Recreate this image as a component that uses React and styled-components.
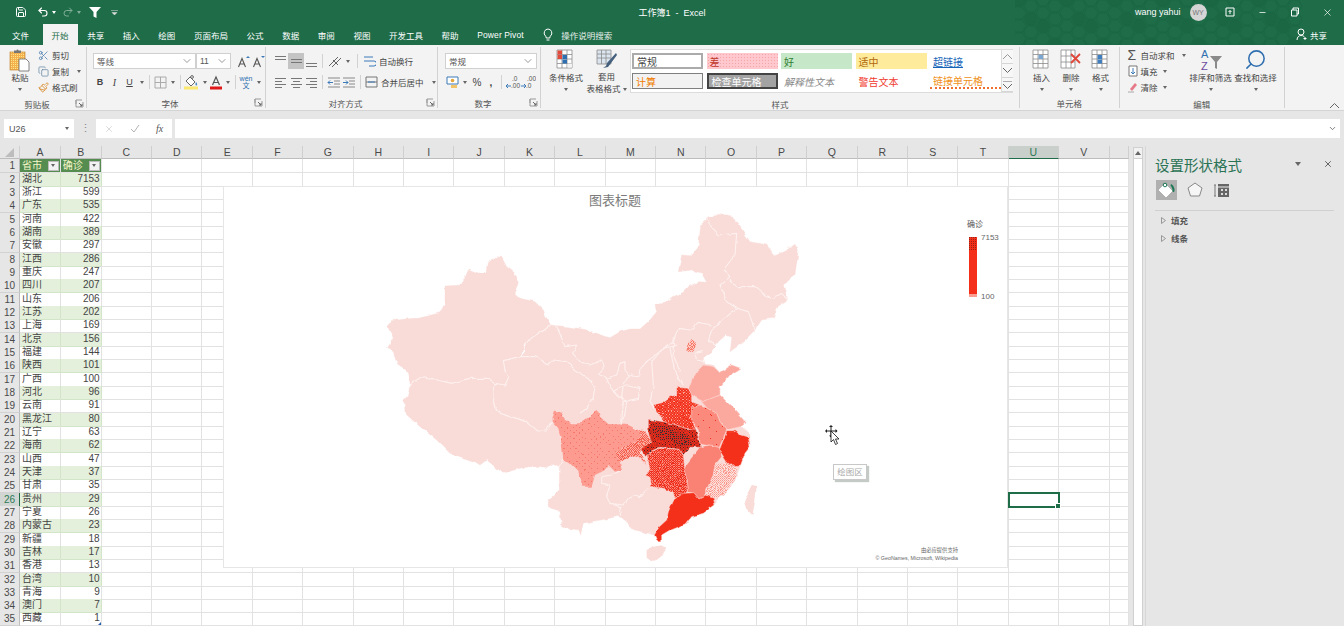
import React from "react";
import styled, { createGlobalStyle, css } from "styled-components";
import { ChevronDown, Copy, Paintbrush, Scissors, Save, Undo2, Redo2, X, Minus, Search } from "lucide-react";

const GlobalStyle = createGlobalStyle`
  html, body { margin: 0; padding: 0; width: 1344px; height: 626px; overflow: hidden; background: #e6e6e6; }
  body { font-family: "Liberation Sans", "Noto Sans CJK SC", sans-serif; color: #444; }
  * { box-sizing: border-box; }
`;

const GREEN = "#1e6c48";
const CJK = `"Liberation Sans", "Noto Sans CJK SC", sans-serif`;

// ---------- window header ----------
const Page = styled.div`
  width: 1344px;
  height: 626px;
  display: flex;
  flex-direction: column;
  overflow: hidden;
`;
const Header = styled.header`
  position: relative;
  background: ${GREEN};
  color: #fff;
  height: 45px;
  flex: none;
`;
const HexArt = styled.svg`
  position: absolute;
  left: 1015px;
  top: 0;
`;
const TitleBar = styled.div`
  position: relative;
  height: 24px;
  display: grid;
  grid-template-columns: 1fr auto 1fr;
  align-items: center;
  font-size: 9px;
`;
const Qat = styled.div`
  display: flex;
  align-items: center;
  padding-left: 14px;
`;
const QatBtn = styled.span`
  width: ${(p) => p.$w}px;
  display: flex;
  align-items: center;
  justify-content: center;
  opacity: ${(p) => (p.$dim ? 0.45 : 1)};
`;
const WindowTitle = styled.div`
  white-space: pre;
`;
const WinControls = styled.div`
  display: flex;
  justify-content: flex-end;
  align-items: center;
`;
const UserName = styled.span`
  font-size: 9px;
  margin-right: 9px;
`;
const Avatar = styled.span`
  width: 17px;
  height: 17px;
  border-radius: 50%;
  background: #d5d5d5;
  color: #777;
  font-size: 7px;
  display: flex;
  align-items: center;
  justify-content: center;
  margin-right: 7px;
`;
const WinBtn = styled.span`
  width: 32.6px;
  display: flex;
  justify-content: center;
  align-items: center;
`;
const TabBar = styled.nav`
  position: relative;
  height: 21px;
  display: flex;
  align-items: stretch;
  padding-left: 3px;
  font-size: 8.5px;
`;
const Tab = styled.span`
  padding: 0 9px;
  display: flex;
  align-items: center;
  white-space: nowrap;
  margin-right: ${(p) => p.$mr ?? 0.6}px;
  letter-spacing: ${(p) => p.$track || 0}px;
  ${(p) =>
    p.$active &&
    css`
      background: #f3f3f3;
      color: ${GREEN};
    `}
`;
const TellMe = styled.span`
  display: flex;
  align-items: center;
  gap: 8px;
  margin-left: 10px;
  color: #e8f0ea;
`;
const ShareBtn = styled.span`
  margin-left: auto;
  margin-right: 17px;
  display: flex;
  align-items: center;
  gap: 2px;
`;

// ---------- ribbon ----------
const Ribbon = styled.section`
  height: 66px;
  flex: none;
  background: #f3f3f3;
  border-bottom: 1px solid #d4d4d4;
  display: flex;
  position: relative;
`;
const GroupBox = styled.div`
  width: ${(p) => p.$w}px;
  flex: none;
  display: flex;
  flex-direction: column;
  border-right: 1px solid #d2d2d2;
  margin: 2px 0 2px;
`;
const GroupBody = styled.div`
  height: 48px;
  margin-top: ${(p) => p.$mt || 0}px;
  padding-left: ${(p) => p.$pl || 0}px;
  display: flex;
  gap: ${(p) => p.$gap || 0}px;
  flex-direction: ${(p) => (p.$col ? "column" : "row")};
`;
const GroupFoot = styled.div`
  margin-top: auto;
  height: 14px;
  padding-top: 3px;
  display: flex;
  align-items: center;
  font-size: 8.5px;
  color: #555;
`;
const GroupName = styled.span`
  flex: 1;
  text-align: center;
`;
const Launcher = styled.svg`
  width: 11px;
  margin-right: 1px;
`;
const Big = styled.div`
  width: ${(p) => p.$w}px;
  flex: none;
  display: flex;
  flex-direction: column;
  align-items: center;
  font-size: 8.5px;
  color: #444;
  line-height: 12px;
  white-space: nowrap;
`;
const BigIcon = styled.div`
  height: 25px;
  display: flex;
  align-items: center;
  justify-content: center;
`;
const Caret = styled.i`
  display: inline-block;
  flex: none;
  width: 0;
  height: 0;
  border-left: 2.5px solid transparent;
  border-right: 2.5px solid transparent;
  border-top: 3px solid #666;
  margin: ${(p) => p.$m || "0"};
`;
const CaretLine = styled.div`
  height: 10px;
  display: flex;
  align-items: center;
`;
const SmallCol = styled.div`
  width: ${(p) => p.$w}px;
  flex: none;
  display: flex;
  flex-direction: column;
`;
const SmallRow = styled.div`
  height: 16px;
  display: flex;
  align-items: center;
  gap: 3px;
  font-size: 8.5px;
  color: #444;
  white-space: nowrap;
`;
const Toolbar = styled.div`
  height: 16px;
  display: flex;
  align-items: center;
`;
const Slot = styled.span`
  width: ${(p) => p.$w}px;
  height: 16px;
  flex: none;
  display: flex;
  align-items: center;
  justify-content: center;
  font-size: ${(p) => p.$fs || 9}px;
  font-weight: ${(p) => (p.$b ? 700 : 400)};
  font-style: ${(p) => (p.$i ? "italic" : "normal")};
  text-decoration: ${(p) => (p.$u ? "underline" : "none")};
  font-family: ${(p) => (p.$serif ? `"Liberation Serif", serif` : "inherit")};
  background: ${(p) => (p.$on ? "#c4c4c4" : "transparent")};
  color: #444;
`;
const PhoneticSlot = styled(Slot)`
  color: #2b6fb0;
  line-height: 7px;
  text-align: center;
`;
const Sep = styled.span`
  width: 1px;
  height: 14px;
  flex: none;
  background: #d2d2d2;
  margin: 0 ${(p) => p.$m || 3}px;
`;
const SelectBox = styled.div`
  width: ${(p) => p.$w}px;
  height: 16px;
  flex: none;
  background: #fff;
  border: 1px solid #d0d0d0;
  display: flex;
  align-items: center;
  justify-content: space-between;
  padding: 0 2px 0 3px;
  font-size: 8.5px;
  color: #555;
`;

// style gallery
const Gallery = styled.div`
  width: 383px;
  height: 44px;
  margin: 2px 0 0 2px;
  background: #fff;
  border: 1px solid #dcdcdc;
  display: flex;
`;
const GalleryGrid = styled.div`
  flex: 1;
  padding: 3px 0 0 1px;
  display: grid;
  grid-template-columns: repeat(5, 71px);
  grid-template-rows: 16px 16px;
  column-gap: 3.5px;
  row-gap: 4px;
`;
const styleKinds = {
  normal: css`background: #fff; border: 2px solid #ababab; color: #444;`,
  bad: css`background: #ffc7ce; color: #c0392b; background-image: radial-gradient(#f5a5a5 0.6px, transparent 0.7px); background-size: 3px 3px;`,
  good: css`background: #c6e7c8; color: #2e7d32;`,
  neutral: css`background: #ffeb9c; color: #b0660a; background-image: radial-gradient(#e9b870 0.5px, transparent 0.6px); background-size: 4px 4px;`,
  link: css`color: #1464b8; text-decoration: underline;`,
  calc: css`background: #f2f2f2; border: 1px solid #7f7f7f; color: #f07d00;`,
  check: css`background: #a3a3a3; border: 2px solid #444; color: #fff;`,
  note: css`color: #888; font-style: italic;`,
  warn: css`color: #f03a2e;`,
  linked: css`color: #f09020; border-bottom: 2px dotted #f07030;`,
};
const StyleCell = styled.span`
  display: flex;
  align-items: center;
  padding-left: 3px;
  font-size: 10px;
  white-space: nowrap;
  overflow: hidden;
  ${(p) => styleKinds[p.$kind]}
`;
const GalleryScroll = styled.div`
  width: 12px;
  flex: none;
  display: grid;
  grid-template-rows: 14px 14px 14px;
  border-left: 1px solid #dcdcdc;
  background: #f7f7f7;
`;
const ScrollCell = styled.span`
  display: flex;
  align-items: center;
  justify-content: center;
  border-bottom: 1px solid #d5d5d5;
`;
const CollapseWrap = styled.div`
  flex: 1;
  display: flex;
  align-items: flex-end;
  justify-content: flex-end;
  padding: 0 5px 2px 0;
`;

// ---------- formula bar ----------
const FormulaBar = styled.div`
  height: 35px;
  flex: none;
  padding: 8px 4px;
  display: flex;
  align-items: stretch;
  background: #e6e6e6;
`;
const NameBox = styled.div`
  width: 70px;
  background: #fff;
  display: flex;
  align-items: center;
  justify-content: space-between;
  padding: 0 5px;
  font-size: 9px;
  color: #555;
`;
const Dots = styled.span`
  width: 22px;
  text-align: center;
  color: #888;
  font-size: 11px;
  line-height: 19px;
`;
const FxBox = styled.div`
  width: 76px;
  background: #fff;
  display: grid;
  grid-template-columns: 26px 25px 25px;
  align-items: center;
  justify-items: center;
  color: #b4b4b4;
`;
const FxLabel = styled.span`
  font-family: "Liberation Serif", serif;
  font-style: italic;
  color: #555;
  font-size: 10px;
`;
const FormulaInput = styled.div`
  flex: 1;
  margin-left: 3px;
  background: #fff;
  display: flex;
  align-items: center;
  justify-content: flex-end;
  padding-right: 3px;
`;

// ---------- sheet ----------
const Workspace = styled.div`
  flex: 1;
  display: flex;
  min-height: 0;
`;
const SheetArea = styled.div`
  position: relative;
  width: 1129px;
  flex: none;
  overflow: hidden;
  background: #fff;
`;
const COLS = "20px 40.8px 40.9px repeat(20, 50.4px) 1fr";
const SheetRow = styled.div`
  display: grid;
  grid-template-columns: ${COLS};
  height: 13.33px;
`;
const HeadCell = styled.div`
  background: ${(p) => (p.$on ? "#c9cfcb" : "#e6e6e6")};
  border-right: 1px solid #cfcfcf;
  border-bottom: ${(p) => (p.$on ? `1px solid ${GREEN}` : "1px solid #bdbdbd")};
  color: ${(p) => (p.$on ? "#2b7a55" : "#4a4a4a")};
  font-size: 10.5px;
  display: flex;
  align-items: center;
  justify-content: center;
  overflow: hidden;
`;
const RowHead = styled.div`
  background: ${(p) => (p.$on ? "#d2d6d3" : "#e6e6e6")};
  border-right: ${(p) => (p.$on ? `1.5px solid ${GREEN}` : "1px solid #bdbdbd")};
  border-bottom: 1px solid #d2d2d2;
  color: ${(p) => (p.$on ? "#2b7a55" : "#4a4a4a")};
  font-size: 10px;
  line-height: 13px;
  text-align: right;
  padding-right: 4px;
`;
const Cell = styled.div`
  position: relative;
  border-right: 1px solid #e2e2e2;
  border-bottom: 1px solid #e2e2e2;
  font-family: ${CJK};
  font-size: 10px;
  line-height: 12.6px;
  color: #444;
  padding: 0 1px 0 2px;
  text-align: ${(p) => (p.$num ? "right" : "left")};
  white-space: nowrap;
  ${(p) =>
    p.$band &&
    css`
      background-color: #e4f0dc;
      background-image: radial-gradient(#cfe3c0 0.5px, transparent 0.6px);
      background-size: 2px 2px;
      border-color: #d3e5c8;
    `}
  ${(p) =>
    p.$head &&
    css`
      background-color: #558d51;
      background-image: radial-gradient(#a3c583 0.5px, transparent 0.6px);
      background-size: 2px 2px;
      color: #f5f6c8;
      display: flex;
      align-items: center;
      justify-content: space-between;
      padding-right: 1px;
    `}
  ${(p) =>
    p.$corner &&
    css`
      &::after {
        content: "";
        position: absolute;
        right: 0;
        bottom: 0;
        border-left: 3px solid transparent;
        border-bottom: 3px solid #2c5fb0;
      }
    `}
  ${(p) =>
    p.$selected &&
    css`
      outline: 2px solid ${GREEN};
      outline-offset: -1px;
      z-index: 2;
      &::after {
        content: "";
        position: absolute;
        right: -3px;
        bottom: -3px;
        width: 4px;
        height: 4px;
        background: ${GREEN};
        border: 1px solid #fff;
      }
    `}
`;
const FilterBtn = styled.span`
  width: 11px;
  height: 10px;
  background: #f2f2f2;
  border: 1px solid #bbb;
  display: flex;
  align-items: center;
  justify-content: center;
`;

// ---------- chart ----------
const Chart = styled.div`
  position: absolute;
  left: 223px;
  top: 40px;
  width: 785px;
  height: 382px;
  background: #fff;
  border: 1px solid #e6e6e6;
  z-index: 3;
`;
const ChartTitle = styled.div`
  text-align: center;
  font-size: 13px;
  line-height: 15px;
  margin-top: 6px;
  padding-right: 1px;
  color: #7b7b7b;
`;
const MapSvg = styled.svg`
  position: absolute;
  left: 156px;
  top: 18px;
`;
const Legend = styled.div`
  position: absolute;
  left: 743px;
  top: 31px;
  display: grid;
  grid-template-columns: 12px auto;
  grid-template-rows: 19px 60px;
  column-gap: 1px;
  font-size: 8px;
  color: #666;
`;
const LegendTitle = styled.span`
  grid-column: 1 / 3;
  color: #555;
  white-space: nowrap;
`;
const LegendBar = styled.svg`
  margin-left: 2px;
`;
const LegendScale = styled.div`
  display: flex;
  flex-direction: column;
  justify-content: space-between;
  line-height: 8px;
  margin-bottom: -4px;
  margin-top: -3px;
  margin-left: 1px;
`;
const Credits = styled.div`
  position: absolute;
  right: 49px;
  bottom: 5px;
  text-align: right;
  color: #666;
  font-size: 5.3px;
  line-height: 8px;
`;
const MoveCursor = styled.svg`
  position: absolute;
  left: 601px;
  top: 238px;
`;
const ChartTip = styled.div`
  position: absolute;
  left: 609px;
  top: 277px;
  width: 34px;
  height: 16px;
  background: #fff;
  border: 1px solid #c8c8c8;
  box-shadow: 2px 2px 1px #c4cbc6;
  color: #aaa;
  font-size: 8.5px;
  line-height: 14px;
  text-align: center;
`;

// ---------- side panel ----------
const ScrollGutter = styled.div`
  width: 16px;
  flex: none;
  padding: 1px 2px 0 3.5px;
`;
const ScrollTrack = styled.div`
  width: 10px;
  height: 100%;
  background: #fff;
  border: 1px solid #d0d0d0;
`;
const ScrollUp = styled.div`
  height: 11px;
  background: #f2f2f2;
  border-bottom: 1px solid #d0d0d0;
  display: flex;
  align-items: center;
  justify-content: center;
`;
const TaskPane = styled.aside`
  flex: 1;
  border-left: 1px solid #d8d8d8;
  background: #e6e6e6;
  padding: 9px 10px 0 9px;
`;
const PaneHead = styled.div`
  display: flex;
  align-items: center;
  height: 18px;
`;
const PaneTitle = styled.h2`
  flex: 1;
  margin: 0;
  font-size: 14.5px;
  font-weight: 400;
  color: #2b7355;
`;
const PaneCaret = styled(Caret)`
  border-left-width: 3px;
  border-right-width: 3px;
  border-top-width: 4px;
  margin-right: 22px;
`;
const PaneTabs = styled.div`
  display: flex;
  align-items: center;
  margin-top: 7px;
  height: 20px;
  padding-left: 1px;
`;
const PaneTab = styled.span`
  width: ${(p) => p.$w}px;
  height: 20px;
  display: flex;
  align-items: center;
  justify-content: center;
  background: ${(p) => (p.$on ? "#b0b0b0" : "transparent")};
`;
const PaneRule = styled.div`
  height: 1px;
  margin-top: 10px;
  background: #d0d0d0;
`;
const PaneSection = styled.div`
  height: 18px;
  display: flex;
  align-items: center;
  gap: 5px;
  padding-left: 6px;
  font-size: 8.5px;
  font-weight: 700;
  color: #555;
  &:first-of-type {
    margin-top: 2px;
  }
`;

// ---------- small drawings ----------
const Lines = ({ rows, color = "#777" }) => (
  <svg width="15" height="14" viewBox="0 0 15 14">
    {rows.map(([a, b, y]) => (
      <line key={y} x1={a} x2={b} y1={y + 0.5} y2={y + 0.5} stroke={color} />
    ))}
  </svg>
);
const Launch = () => (
  <Launcher height="9" viewBox="0 0 9 9">
    <path d="M1 5V1h6M1 1v7h7V3" fill="none" stroke="#999" />
    <path d="M4 4l3 3M7 5v2H5" fill="none" stroke="#666" />
  </Launcher>
);
const GridPic = ({ w = 20, h = 22, cells = [] }) => (
  <svg width={w} height={h} viewBox="0 0 20 22">
    <path d="M1 1h15v18H1zM6 1v18M11 1v18M1 5.5h15M1 10h15M1 14.5h15" fill="#fff" stroke="#8a8a8a" strokeWidth="0.8" />
    {cells.map(([x, y, c], i) => (
      <rect key={i} x={x} y={y} width="4.5" height="4" fill={c} />
    ))}
  </svg>
);
const PasteIcon = () => (
  <svg width="22" height="24" viewBox="0 0 22 24">
    <defs>
      <pattern id="pasteDots" width="2" height="2" patternUnits="userSpaceOnUse">
        <rect width="2" height="2" fill="#f3b04d" />
        <rect width="1" height="1" fill="#fde58a" />
      </pattern>
    </defs>
    <rect x="1" y="4" width="15" height="18" fill="url(#pasteDots)" stroke="#c98a3a" strokeWidth="0.7" />
    <path d="M5 5V2.5h2.5a1 1 0 0 1 2 0H12V5z" fill="#777" />
    <path d="M10 11h7l3 3v9H10z" fill="#fff" stroke="#666" strokeWidth="0.8" />
  </svg>
);
const FillColor = () => (
  <svg width="16" height="15" viewBox="0 0 16 15">
    <path d="M6 2l5 5-4 4-5-5z" fill="#fff" stroke="#666" />
    <circle cx="8" cy="2" r="1.4" fill="none" stroke="#666" />
    <path d="M12 7c1.5 2 1.5 3 .5 3.5S11 9 12 7" fill="#4a8ac6" />
    <rect x="0" y="11.5" width="14" height="3" fill="#fbe870" />
  </svg>
);
const FontColor = () => (
  <svg width="14" height="15" viewBox="0 0 14 15">
    <path d="M3.5 10L7 2l3.5 8M5 7.5h4" fill="none" stroke="#555" strokeWidth="1.2" />
    <rect x="1" y="11.5" width="12" height="3" fill="#e01818" />
  </svg>
);
const FontSizeA = ({ up }) => (
  <svg width="13" height="13" viewBox="0 0 13 13">
    <path d="M1.5 12L5 3.5 8.5 12M3 9h4" fill="none" stroke="#555" strokeWidth="1.1" />
    <path d={up ? "M9 3l2-2 2 2z" : "M9 1l2 2 2-2z"} fill="#3d7ab8" />
  </svg>
);
const DecimalIcon = ({ top, bottom, left }) => (
  <svg width="15" height="15" viewBox="0 0 15 15" fontFamily="Liberation Sans" fontSize="6.5">
    <text x="6" y="6" fill="#555">{top}</text>
    <text x="5" y="13" fill="#555">{bottom}</text>
    <path d={left ? "M5 11H0M2 9l-2 2 2 2" : "M0 11h5M3 9l2 2-2 2"} fill="none" stroke="#3d7ab8" />
  </svg>
);
const MoveGlyph = () => (
  <MoveCursor width="18" height="22" viewBox="0 0 18 22">
    <path d="M6 1v11M1 6h11" stroke="#222" strokeWidth="1" />
    <path d="M6 0l2 2H4zM6 12.5l-2-2h4zM0 6l2-2v4zM12.5 6l-2 2V4z" fill="#222" />
    <path d="M6 6v11l2.5-2.5 2 5 2-1-2-4.5H14z" fill="#fff" stroke="#111" strokeWidth="0.8" />
  </MoveCursor>
);

// ---------- map ----------
const LAND =
  "22,363 35,347 70,343 100,340 115,340 180,323 195,295 195,243 245,240 265,195 295,207 318,205 322,173 352,155 365,157 380,185 405,205 418,235 405,265 420,280 465,290 490,315 500,340 512,360 560,365 610,372 650,385 690,398 720,380 750,372 780,372 810,345 830,320 825,298 855,295 880,275 910,262 925,245 955,230 980,232 965,205 935,195 895,200 905,150 935,152 955,125 962,60 985,38 1015,25 1055,33 1080,65 1110,110 1160,120 1185,152 1220,135 1245,118 1255,135 1245,210 1210,240 1223,285 1195,300 1180,340 1145,345 1125,375 1085,415 1050,440 1055,400 1040,388 1015,410 995,440 970,458 975,478 1000,480 1020,503 1055,480 1082,490 1050,510 1020,545 1020,570 1065,615 1095,650 1085,665 1110,690 1110,725 1095,745 1080,785 1065,825 1040,860 1010,880 1008,897 970,925 935,935 920,955 870,975 845,990 845,1010 832,1010 823,990 785,980 750,970 740,950 715,930 690,940 610,955 602,990 595,970 570,975 545,960 540,920 505,905 505,885 538,855 538,785 520,775 500,790 450,785 420,790 370,805 320,765 300,780 285,770 210,745 170,705 120,665 75,625 72,585 85,570 90,535 85,500 50,475 40,440 22,430 40,400";

// border lines, each block in the coordinates of its own offset
const BORDERS_WEST = [
  "512,225 480,250 450,265 435,285",
  "420,320 370,332 375,360 388,378 375,405 345,400",
  "90,405 130,380 170,390 215,400 270,385 325,385 345,400",
  "345,400 340,460 360,490 410,505 440,515 470,540 500,540 518,515",
  "420,320 470,320 505,345 520,330 560,335 585,360 620,380 645,410 640,440 620,475 600,490",
  "530,228 545,265 555,290 590,285 578,310 605,340 630,345 665,330 670,355 655,372 680,385 690,410 715,440 725,445 730,400 755,375 780,378",
  "680,385 710,375 720,340 735,335 735,360 750,378",
  "725,445 740,455 735,490 720,530",
];
const BORDERS_CENTER = [
  "815,470 820,540 810,590 825,610",
  "730,540 700,560 730,590 725,650",
  "730,540 780,550 775,580 730,590",
  "815,470 850,430 890,420 870,430 885,500 910,540",
];
const BORDERS_NORTH = [
  "235,45 240,65 265,90 320,85 315,150 280,195 300,215 270,240 290,290 320,310 260,360 245,375 235,405 255,420",
  "300,225 320,245 375,245 405,270 430,280 455,265 473,285",
  "320,310 355,320 375,375",
  "245,360 205,352 180,375 145,370 130,410 100,430 70,455 35,480 30,510",
  "130,410 130,450 150,500",
  "215,440 195,445 200,465 225,470",
];
const BORDERS_SOUTH = [
  "335,210 305,225 275,230 275,250 300,255 290,290 300,310 340,315 355,295 375,285 390,290 415,265",
  "300,310 330,320 335,345",
  "148,200 158,178",
];
const SOUTHEAST = [
  { id: "shandong", fill: "#fba89e", pts: "205,85 230,35 250,15 280,20 300,38 335,15 362,25 330,45 300,80 300,105 250,125 240,120 215,105" },
  { id: "jiangsu", fill: "#fba89e", pts: "240,120 250,125 300,105 345,150 375,185 365,200 340,205 320,210 300,185 290,160 262,145" },
  { id: "jiangxi", fill: "#f98274", pts: "190,325 240,260 270,255 298,262 305,290 285,315 280,345 262,385 255,405 235,415 222,400 205,395 200,345" },
  { id: "fujian", fill: "url(#mFujian)", pts: "262,385 280,345 285,315 320,305 335,318 352,318 345,360 320,395 290,415 255,405" },
  { id: "anhui", fill: "url(#mAnhui)", pts: "215,135 240,135 262,145 290,160 300,185 320,210 298,262 270,255 240,250 235,210 215,180" },
  { id: "henan", fill: "url(#mHenan)", pts: "170,82 205,85 215,105 215,125 240,135 215,140 215,180 228,208 195,205 160,192 130,185 100,135 125,128 150,110 170,105" },
  { id: "hunan", fill: "url(#mHunan)", pts: "80,280 120,265 180,268 190,285 195,330 200,345 205,395 165,415 160,400 130,385 95,380 90,352 75,345 90,330" },
  { id: "hubei", fill: "url(#mHubei)", pts: "85,178 130,185 160,192 195,205 228,208 243,262 210,262 190,285 180,268 120,262 90,275 75,290 60,262 95,250 85,215" },
  { id: "hubeiCore", fill: "url(#mHubeiCore)", pts: "95,195 150,198 165,215 205,225 215,255 180,258 150,240 110,235" },
  { id: "zhejiang", fill: "#f42f1a", pts: "345,212 362,225 385,232 390,260 375,280 362,315 335,318 320,305 298,270 320,215 340,215" },
  { id: "guangdong", fill: "#f42f1a", pts: "285,435 250,460 215,470 200,490 150,510 125,525 125,545 112,545 103,525 118,500 140,480 145,455 160,420 190,400 222,398 235,415 255,405 280,415" },
];
const SICHUAN =
  "128,55 135,35 155,38 165,60 185,70 210,70 245,45 255,30 265,35 270,50 295,72 355,75 385,90 392,105 380,125 345,140 315,160 330,185 335,210 315,215 295,195 285,210 255,225 245,260 220,260 205,215 175,185 160,180 155,125 145,85 128,65";
const CHONGQING =
  "385,90 405,95 432,130 390,155 410,195 385,170 355,170 330,185 315,160 345,140 380,125 392,105";

const Dither = ({ id, size, bg, dots }) => (
  <pattern id={id} width={size} height={size} patternUnits="userSpaceOnUse">
    <rect width={size} height={size} fill={bg} />
    {dots.map(([x, y, c], i) => (
      <rect key={i} x={x} y={y} width="3" height="3" fill={c} />
    ))}
  </pattern>
);

const ChinaMap = () => (
  <MapSvg width="430" height="362" viewBox="0 0 1290 1086">
    <defs>
      <filter id="rough" x="-2%" y="-2%" width="104%" height="104%" colorInterpolationFilters="sRGB">
        <feTurbulence type="fractalNoise" baseFrequency="0.045" numOctaves="2" seed="4" />
        <feDisplacementMap in="SourceGraphic" scale="11" xChannelSelector="R" yChannelSelector="G" />
      </filter>
      <Dither id="mHubei" size={9} bg="#ee2d1c" dots={[[0, 0, "#4a2320"], [4.5, 4.5, "#4a2320"]]} />
      <Dither id="mHubeiCore" size={6} bg="#d42a1e" dots={[[0, 0, "#33302f"]]} />
      <Dither id="mHenan" size={9} bg="#f2301c" dots={[[0, 0, "#fb9f90"], [4.5, 4.5, "#fb9f90"]]} />
      <Dither id="mHunan" size={6} bg="#ee2e1c" dots={[[0, 0, "#fb8d7e"], [3, 3, "#f96352"]]} />
      <Dither id="mSichuan" size={18} bg="#fd9b90" dots={[[0, 0, "#f5796a"], [9, 9, "#f5796a"]]} />
      <Dither id="mChongqing" size={6} bg="#fdaaa0" dots={[[3, 0, "#f4624f"], [0, 3, "#f4624f"]]} />
      <Dither id="mAnhui" size={36} bg="#fb8a7c" dots={[[0, 0, "#ee2e1c"], [18, 18, "#ee2e1c"]]} />
      <Dither id="mFujian" size={6} bg="#fde0dc" dots={[[0, 0, "#fa9a8e"], [3, 3, "#fbb3a9"]]} />
      <Dither id="mBeijing" size={6} bg="#fdc8c0" dots={[[0, 0, "#f77a6a"], [3, 3, "#f77a6a"]]} />
    </defs>
    <g filter="url(#rough)">
      <polygon points={LAND} fill="#f9dbd7" strokeLinejoin="round" stroke="#f9dbd7" strokeWidth="1" />
      <polygon points="395,840 410,843 405,895 397,930 378,910 372,890 385,860" transform="translate(720,0)" fill="#f9dbd7" />
      <polygon points="130,555 140,560 125,590 100,603 80,590 80,570 100,560" transform="translate(720,465)" fill="#f9dbd7" />
      <polyline points="438,415 432,440 420,455" fill="none" stroke="#fff" strokeWidth="4" />
      <g fill="none" stroke="#fdf0ee" strokeWidth="3.5" strokeLinejoin="round">
        <g transform="translate(0,135)">
          {BORDERS_WEST.map((p) => <polyline key={p} points={p} />)}
        </g>
        {BORDERS_CENTER.map((p) => <polyline key={p} points={p} />)}
        <g transform="translate(750,0)">
          {BORDERS_NORTH.map((p) => <polyline key={p} points={p} />)}
        </g>
        <g transform="translate(390,585)">
          {BORDERS_SOUTH.map((p) => <polyline key={p} points={p} />)}
        </g>
      </g>
      <polygon points="185,405 200,415 190,440 172,440 175,420" transform="translate(750,0)" fill="url(#mBeijing)" />
      <g transform="translate(390,585)">
        <polygon points={SICHUAN} fill="url(#mSichuan)" />
        <polygon points={CHONGQING} fill="url(#mChongqing)" />
      </g>
      <g transform="translate(720,465)">
        {SOUTHEAST.map((s) => (
          <polygon key={s.id} points={s.pts} fill={s.fill} stroke={s.id === "hubeiCore" ? "none" : "#fdd9d4"} strokeWidth="1.5" strokeLinejoin="round" />
        ))}
      </g>
    </g>
  </MapSvg>
);

// ---------- data ----------
const TABLE = [
  ["湖北", 7153], ["浙江", 599], ["广东", 535], ["河南", 422], ["湖南", 389], ["安徽", 297], ["江西", 286],
  ["重庆", 247], ["四川", 207], ["山东", 206], ["江苏", 202], ["上海", 169], ["北京", 156], ["福建", 144],
  ["陕西", 101], ["广西", 100], ["河北", 96], ["云南", 91], ["黑龙江", 80], ["辽宁", 63], ["海南", 62],
  ["山西", 47], ["天津", 37], ["甘肃", 35], ["贵州", 29], ["宁夏", 26], ["内蒙古", 23], ["新疆", 18],
  ["吉林", 17], ["香港", 13], ["台湾", 10], ["青海", 9], ["澳门", 7], ["西藏", 1],
];
const LETTERS = "ABCDEFGHIJKLMNOPQRSTUV".split("");
const TAIL = LETTERS.slice(2);
const TABS = ["共享", "插入", "绘图", "页面布局", "公式", "数据", "审阅", "视图", "开发工具", "帮助"];

const HEXES = [];
for (let col = 0; col < 24; col++) {
  for (let row = 0; row < 4; row++) {
    HEXES.push([col * 12 + 4, row * 13 + (col % 2 ? 6 : 0), (col * 5 + row * 7) % 4 === 0]);
  }
}

const HexBackdrop = () => (
  <HexArt width="290" height="45" viewBox="0 0 290 45">
    {HEXES.map(([x, y, solid]) => (
      <polygon
        key={`${x}-${y}`}
        points={`${x - 7},${y} ${x - 3.5},${y - 6} ${x + 3.5},${y - 6} ${x + 7},${y} ${x + 3.5},${y + 6} ${x - 3.5},${y + 6}`}
        fill={solid ? "#1b6643" : "none"}
        stroke="#1b6744"
      />
    ))}
  </HexArt>
);

const Group = ({ w, name, launcher, children, ...body }) => (
  <GroupBox $w={w}>
    <GroupBody {...body}>{children}</GroupBody>
    <GroupFoot>
      <GroupName>{name}</GroupName>
      {launcher && <Launch />}
    </GroupFoot>
  </GroupBox>
);

const STYLE_CELLS = [
  ["normal", "常规"], ["bad", "差"], ["good", "好"], ["neutral", "适中"], ["link", "超链接"],
  ["calc", "计算"], ["check", "检查单元格"], ["note", "解释性文本"], ["warn", "警告文本"], ["linked", "链接单元格"],
];

const Ribbons = () => (
  <Ribbon>
    <Group w={87} name="剪贴板" launcher $pl={8}>
      <Big $w={24}>
        <BigIcon><PasteIcon /></BigIcon>
        粘贴
        <CaretLine><Caret /></CaretLine>
      </Big>
      <SmallCol $w={50} style={{ marginLeft: 6 }}>
        <SmallRow><Scissors size={11} color="#3a72a8" strokeWidth={1.5} />剪切</SmallRow>
        <SmallRow><Copy size={11} color="#5b7f9e" strokeWidth={1.5} />复制<Caret $m="0 0 0 5px" /></SmallRow>
        <SmallRow><Paintbrush size={11} color="#d98a2b" strokeWidth={1.8} />格式刷</SmallRow>
      </SmallCol>
    </Group>

    <Group w={179} name="字体" launcher $pl={6} $mt={6} $gap={5} $col>
      <Toolbar>
        <SelectBox $w={103}>等线<ChevronDown size={12} color="#555" strokeWidth={1.2} /></SelectBox>
        <SelectBox $w={35}>11<ChevronDown size={12} color="#555" strokeWidth={1.2} /></SelectBox>
        <Slot $w={5} />
        <Slot $w={14}><FontSizeA up /></Slot>
        <Slot $w={16}><FontSizeA /></Slot>
      </Toolbar>
      <Toolbar>
        <Slot $w={14} $b>B</Slot>
        <Slot $w={15} $i $serif $fs={10}>I</Slot>
        <Slot $w={15} $u>U</Slot>
        <Slot $w={10}><Caret /></Slot>
        <Sep $m={2} />
        <Slot $w={16}>
          <svg width="13" height="13" viewBox="0 0 13 13"><path d="M1 1h11v11H1zM6.5 1v11M1 6.5h11" fill="none" stroke="#aaa" /></svg>
        </Slot>
        <Slot $w={10}><Caret /></Slot>
        <Sep $m={2} />
        <Slot $w={17}><FillColor /></Slot>
        <Slot $w={9}><Caret /></Slot>
        <Slot $w={14}><FontColor /></Slot>
        <Slot $w={10}><Caret /></Slot>
        <Sep $m={2} />
        <PhoneticSlot $w={16} $fs={7}>wén<br />文</PhoneticSlot>
        <Slot $w={9}><Caret /></Slot>
      </Toolbar>
    </Group>

    <Group w={172} name="对齐方式" launcher $pl={7} $mt={6} $gap={5} $col>
      <Toolbar>
        <Slot $w={15}><Lines rows={[[2, 13, 2], [2, 13, 5]]} /></Slot>
        <Slot $w={16} $on><Lines rows={[[2, 13, 5], [2, 13, 8]]} /></Slot>
        <Slot $w={15}><Lines rows={[[2, 13, 9], [2, 13, 12]]} /></Slot>
        <Sep $m={3} />
        <Slot $w={17}>
          <svg width="14" height="13" viewBox="0 0 14 13"><path d="M1 11L10 2M4 12l9-9M5 5l5 5" fill="none" stroke="#666" /></svg>
        </Slot>
        <Slot $w={9}><Caret /></Slot>
        <Sep $m={5} />
        <SmallRow>
          <svg width="13" height="14" viewBox="0 0 13 14"><path d="M1 3h9M1 7h10a2.5 2.5 0 0 1 0 5H6" fill="none" stroke="#3d7ab8" /></svg>
          自动换行
        </SmallRow>
      </Toolbar>
      <Toolbar>
        <Slot $w={15}><Lines rows={[[2, 13, 3], [2, 9, 6], [2, 13, 9], [2, 9, 12]]} /></Slot>
        <Slot $w={16}><Lines rows={[[2, 13, 3], [4, 11, 6], [2, 13, 9], [4, 11, 12]]} /></Slot>
        <Slot $w={15}><Lines rows={[[2, 13, 3], [6, 13, 6], [2, 13, 9], [6, 13, 12]]} /></Slot>
        <Sep $m={3} />
        <Slot $w={15}>
          <svg width="14" height="13" viewBox="0 0 14 13"><path d="M1 2h12M7 5h6M7 8h6M1 11h12" stroke="#888" fill="none" /><path d="M6 6.5H1M3 4.500l-2 2 2 2" stroke="#3d7ab8" fill="none" /></svg>
        </Slot>
        <Slot $w={15}>
          <svg width="14" height="13" viewBox="0 0 14 13"><path d="M1 2h12M7 5h6M7 8h6M1 11h12" stroke="#888" fill="none" /><path d="M1 6.5h5M4 4.500l2 2-2 2" stroke="#3d7ab8" fill="none" /></svg>
        </Slot>
        <Sep $m={4} />
        <SmallRow>
          <svg width="13" height="14" viewBox="0 0 13 14"><path d="M1 2h11v10H1zM1 7h11" fill="none" stroke="#777" /><path d="M3 7h7" stroke="#3d7ab8" /></svg>
          合并后居中
          <Caret $m="0 0 0 5px" />
        </SmallRow>
      </Toolbar>
    </Group>

    <Group w={103} name="数字" launcher $pl={7} $mt={6} $gap={5} $col>
      <SelectBox $w={92}>常规<ChevronDown size={12} color="#555" strokeWidth={1.2} /></SelectBox>
      <Toolbar>
        <Slot $w={15}>
          <svg width="14" height="13" viewBox="0 0 14 13"><path d="M1 1h11v7H1z" fill="#fff" stroke="#3d7ab8" /><circle cx="6.5" cy="4.5" r="1.8" fill="#e5a53c" /><rect x="5" y="9" width="6" height="3" fill="#f2c46a" /></svg>
        </Slot>
        <Slot $w={9}><Caret /></Slot>
        <Slot $w={16} $fs={10}>%</Slot>
        <Slot $w={12} $fs={10} $b>,</Slot>
        <Sep $m={4} />
        <Slot $w={15}><DecimalIcon top=".0" bottom=".00" left /></Slot>
        <Slot $w={15}><DecimalIcon top=".00" bottom=".0" /></Slot>
      </Toolbar>
    </Group>

    <Group w={479} name="样式" $pl={6} $gap={2}>
      <Big $w={38}>
        <BigIcon><GridPic cells={[[1.5, 1.5, "#e24a3c"], [1.5, 6, "#e24a3c"], [6.5, 6, "#2f6fb0"], [6.5, 10.5, "#2f6fb0"], [11.5, 14.5, "#f3f3f3"]]} /></BigIcon>
        条件格式
        <CaretLine><Caret /></CaretLine>
      </Big>
      <Big $w={39}>
        <BigIcon>
          <svg width="22" height="22" viewBox="0 0 22 22">
            <path d="M1 2h14v14H1zM1 6h14M1 10h14M5.5 2v14M10 2v14" fill="#dbe5ef" stroke="#8a8a8a" strokeWidth="0.8" />
            <path d="M20 5L11 15l-1 3-3 2 5-1 9-12z" fill="#44607d" />
          </svg>
        </BigIcon>
        套用
        <span>表格格式<Caret $m="0 0 1px 2px" /></span>
      </Big>
      <Gallery>
        <GalleryGrid>
          {STYLE_CELLS.map(([kind, label]) => <StyleCell key={kind} $kind={kind}>{label}</StyleCell>)}
        </GalleryGrid>
        <GalleryScroll>
          <ScrollCell><svg width="9" height="5" viewBox="0 0 9 5"><path d="M0 5l4.5-4.5L9 5" fill="none" stroke="#999" /></svg></ScrollCell>
          <ScrollCell><svg width="9" height="5" viewBox="0 0 9 5"><path d="M0 0l4.5 4.5L9 0" fill="none" stroke="#666" /></svg></ScrollCell>
          <ScrollCell><svg width="9" height="8" viewBox="0 0 9 8"><path d="M0 0h9M0 3l4.5 4.5L9 3" fill="none" stroke="#666" /></svg></ScrollCell>
        </GalleryScroll>
      </Gallery>
    </Group>

    <Group w={99.5} name="单元格" $pl={7}>
      <Big $w={29}>
        <BigIcon><GridPic cells={[[6.5, 6, "#7aa6d1"]]} /></BigIcon>
        插入
        <CaretLine><Caret /></CaretLine>
      </Big>
      <Big $w={30}>
        <BigIcon>
          <svg width="22" height="22" viewBox="0 0 22 22">
            <path d="M1 1h14v18H1zM1 7h14M1 13h14M6 1v18M11 1v18" fill="#fff" stroke="#8a8a8a" strokeWidth="0.8" />
            <path d="M11 5l9 9M20 5l-9 9" stroke="#e0473a" strokeWidth="1.8" />
          </svg>
        </BigIcon>
        删除
        <CaretLine><Caret /></CaretLine>
      </Big>
      <Big $w={29}>
        <BigIcon><GridPic cells={[[6.5, 6, "#3f7fc0"], [6.5, 10.5, "#3f7fc0"]]} /></BigIcon>
        格式
        <CaretLine><Caret /></CaretLine>
      </Big>
    </Group>

    <Group w={165.5} name="编辑" $pl={8}>
      <SmallCol $w={62}>
        <SmallRow><span style={{ fontSize: 14, width: 10, color: "#555", lineHeight: "14px" }}>Σ</span>自动求和<Caret $m="0 0 0 4px" /></SmallRow>
        <SmallRow>
          <svg width="10" height="12" viewBox="0 0 10 12"><path d="M1 1h8v10H1z" fill="#fff" stroke="#777" /><path d="M5 3v6M3 7l2 2 2-2" fill="none" stroke="#3d7ab8" /></svg>
          填充<Caret $m="0 0 0 2px" />
        </SmallRow>
        <SmallRow>
          <svg width="10" height="12" viewBox="0 0 10 12"><path d="M2 8l5-6 2 2-5 6z" fill="#e57a8a" /><path d="M0 11h6" stroke="#aaa" /></svg>
          清除<Caret $m="0 0 0 2px" />
        </SmallRow>
      </SmallCol>
      <Big $w={42}>
        <BigIcon>
          <svg width="24" height="24" viewBox="0 0 24 24">
            <text x="2" y="10" fontSize="11" fill="#2f6fb0" fontFamily="Liberation Sans">A</text>
            <text x="2" y="22" fontSize="11" fill="#6b4ba0" fontFamily="Liberation Sans">Z</text>
            <path d="M11 8h12l-5 6v7l-2-1v-6z" fill="#8a8a8a" />
          </svg>
        </BigIcon>
        排序和筛选
        <CaretLine><Caret /></CaretLine>
      </Big>
      <Big $w={42} style={{ marginLeft: 3 }}>
        <BigIcon><Search size={23} color="#2f6fb0" strokeWidth={1.6} style={{ transform: "scaleX(-1)" }} /></BigIcon>
        查找和选择
        <CaretLine><Caret /></CaretLine>
      </Big>
    </Group>
    <CollapseWrap>
      <svg width="9" height="5" viewBox="0 0 9 5"><path d="M0 5l4.5-4.500L9 5" fill="none" stroke="#666" /></svg>
    </CollapseWrap>
  </Ribbon>
);

const App = () => (
  <Page>
    <GlobalStyle />
    <Header>
      <HexBackdrop />
      <TitleBar>
        <Qat>
          <QatBtn $w={14}><Save size={12} color="#fff" strokeWidth={2} /></QatBtn>
          <QatBtn $w={8} />
          <QatBtn $w={14}><Undo2 size={12} color="#fff" strokeWidth={2.2} /></QatBtn>
          <QatBtn $w={7}><Caret style={{ borderTopColor: "#fff" }} /></QatBtn>
          <QatBtn $w={4} />
          <QatBtn $w={14} $dim><Redo2 size={12} color="#fff" strokeWidth={2} /></QatBtn>
          <QatBtn $w={7} $dim><Caret style={{ borderTopColor: "#fff" }} /></QatBtn>
          <QatBtn $w={7} />
          <QatBtn $w={12}>
            <svg width="12" height="11" viewBox="0 0 12 11"><path d="M0 0h12L7.5 5v6l-3-1.5V5z" fill="#fff" /></svg>
          </QatBtn>
          <QatBtn $w={8} />
          <QatBtn $w={10}>
            <svg width="7" height="5" viewBox="0 0 7 5"><path d="M0 .5h7M1 2.5h5L3.5 5z" fill="#ddd" stroke="#ddd" strokeWidth="0.5" /></svg>
          </QatBtn>
        </Qat>
        <WindowTitle>工作簿1  -  Excel</WindowTitle>
        <WinControls>
          <UserName>wang yahui</UserName>
          <Avatar>WY</Avatar>
          <WinBtn>
            <svg width="10" height="10" viewBox="0 0 10 10"><path d="M1 1h8v8H1zM5 7V3.500M3.5 5L5 3.500 6.5 5" fill="none" stroke="#fff" /></svg>
          </WinBtn>
          <WinBtn><Minus size={9} color="#fff" /></WinBtn>
          <WinBtn>
            <svg width="10" height="10" viewBox="0 0 10 10"><path d="M1.5 3h5.500v6H1.5zM3 3V1h5.500v6H7" fill="none" stroke="#fff" /></svg>
          </WinBtn>
          <WinBtn><X size={11} color="#fff" strokeWidth={1.5} /></WinBtn>
        </WinControls>
      </TitleBar>
      <TabBar>
        <Tab $mr={4.5}>文件</Tab>
        <Tab $active>开始</Tab>
        {TABS.map((t) => <Tab key={t}>{t}</Tab>)}
        <Tab $track={0.1}>Power Pivot</Tab>
        <TellMe>
          <svg width="10" height="13" viewBox="0 0 10 13"><path d="M5 1a4 4 0 0 0-2.500 7c.5.500.7 1 .7 2h3.600c0-1 .2-1.500.7-2A4 4 0 0 0 5 1zM3.500 12h3" fill="none" stroke="#fff" /></svg>
          操作说明搜索
        </TellMe>
        <ShareBtn>
          <svg width="12" height="13" viewBox="0 0 12 13"><circle cx="5" cy="4" r="3" fill="none" stroke="#fff" /><path d="M1 12c0-3 2-4.500 4-4.500S8 8 8 9M9 9v3M7.500 10.500h3" fill="none" stroke="#fff" /></svg>
          共享
        </ShareBtn>
      </TabBar>
    </Header>

    <Ribbons />

    <FormulaBar>
      <NameBox>U26<Caret /></NameBox>
      <Dots>⋮</Dots>
      <FxBox>
        <X size={10} strokeWidth={1.2} />
        <svg width="10" height="10" viewBox="0 0 10 10"><path d="M1 5l3 3 5-7" fill="none" stroke="#b4b4b4" /></svg>
        <FxLabel>fx</FxLabel>
      </FxBox>
      <FormulaInput><ChevronDown size={9} color="#555" strokeWidth={2} /></FormulaInput>
    </FormulaBar>

    <Workspace>
      <SheetArea>
        <SheetRow>
          <HeadCell>
            <svg width="10" height="9" viewBox="0 0 10 9"><path d="M9 0v9H0z" fill="#bdbdbd" /></svg>
          </HeadCell>
          {LETTERS.map((l) => <HeadCell key={l} $on={l === "U"}>{l}</HeadCell>)}
          <HeadCell />
        </SheetRow>

        <SheetRow>
          <RowHead>1</RowHead>
          <Cell $head>省市<FilterBtn><Caret /></FilterBtn></Cell>
          <Cell $head>确诊<FilterBtn><Caret /></FilterBtn></Cell>
          {TAIL.map((l) => <Cell key={l} />)}
          <Cell />
        </SheetRow>

        {TABLE.map(([name, value], i) => {
          const rowNo = i + 2;
          return (
            <SheetRow key={name}>
              <RowHead $on={rowNo === 26}>{rowNo}</RowHead>
              <Cell $band={rowNo % 2 === 0}>{name}</Cell>
              <Cell $band={rowNo % 2 === 0} $num $corner={rowNo === 35}>{value}</Cell>
              {TAIL.map((l) => <Cell key={l} $selected={rowNo === 26 && l === "U"} />)}
              <Cell />
            </SheetRow>
          );
        })}

        <Chart>
          <ChartTitle>图表标题</ChartTitle>
          <ChinaMap />
          <Legend>
            <LegendTitle>确诊</LegendTitle>
            <LegendBar width="8" height="60" viewBox="0 0 8 60">
              <defs>
                <pattern id="barDots" width="2" height="2" patternUnits="userSpaceOnUse">
                  <rect width="2" height="2" fill="#f42f1a" />
                  <rect width="1" height="1" fill="#5a1d16" />
                </pattern>
              </defs>
              <rect width="8" height="60" fill="#f42f1a" />
              <rect width="8" height="14" fill="url(#barDots)" opacity="0.6" />
              <rect y="57" width="8" height="3" fill="#fb9e92" />
            </LegendBar>
            <LegendScale>
              <span>7153</span>
              <span>100</span>
            </LegendScale>
          </Legend>
          <Credits>
            由必应提供支持
            <br />
            © GeoNames, Microsoft, Wikipedia
          </Credits>
          <MoveGlyph />
          <ChartTip>绘图区</ChartTip>
        </Chart>
      </SheetArea>

      <ScrollGutter>
        <ScrollTrack>
          <ScrollUp>
            <svg width="6" height="4" viewBox="0 0 6 4"><path d="M0 4l3-4 3 4z" fill="#666" /></svg>
          </ScrollUp>
        </ScrollTrack>
      </ScrollGutter>

      <TaskPane>
        <PaneHead>
          <PaneTitle>设置形状格式</PaneTitle>
          <PaneCaret />
          <X size={10} color="#666" strokeWidth={2.4} style={{ marginRight: 1 }} />
        </PaneHead>
        <PaneTabs>
          <PaneTab $w={21} $on>
            <svg width="18" height="17" viewBox="0 0 18 17">
              <path d="M7 2l7 7-6 6-7-7z" fill="#fff" stroke="#fff" />
              <path d="M13 2c2 1 4 4 3.5 7-.2 1.5-2 1.5-2-.5 0-2-1-4-2-5z" fill="#1e7a56" />
              <circle cx="7" cy="3" r="1.8" fill="none" stroke="#1e7a56" />
            </svg>
          </PaneTab>
          <PaneTab $w={8} />
          <PaneTab $w={20}>
            <svg width="16" height="16" viewBox="0 0 16 16"><path d="M8 1l7 5-2.5 8h-9L1 6z" fill="#f6f6f6" stroke="#888" /></svg>
          </PaneTab>
          <PaneTab $w={7} />
          <PaneTab $w={20}>
            <svg width="16" height="15" viewBox="0 0 16 15"><path d="M1 2v11M0 2h2M0 13h2" stroke="#777" fill="none" /><rect x="4" y="1" width="11" height="13" fill="#666" /><path d="M4 4h11" stroke="#eee" /><g fill="#ddd"><rect x="7" y="6" width="2" height="2" /><rect x="11" y="6" width="2" height="2" /><rect x="7" y="10" width="2" height="2" /><rect x="11" y="10" width="2" height="2" /></g></svg>
          </PaneTab>
        </PaneTabs>
        <PaneRule />
        <PaneSection>
          <svg width="5" height="7" viewBox="0 0 5 7"><path d="M.5.5l4 3-4 3z" fill="none" stroke="#999" /></svg>
          填充
        </PaneSection>
        <PaneSection>
          <svg width="5" height="7" viewBox="0 0 5 7"><path d="M.5.5l4 3-4 3z" fill="none" stroke="#999" /></svg>
          线条
        </PaneSection>
      </TaskPane>
    </Workspace>
  </Page>
);

export default App;
